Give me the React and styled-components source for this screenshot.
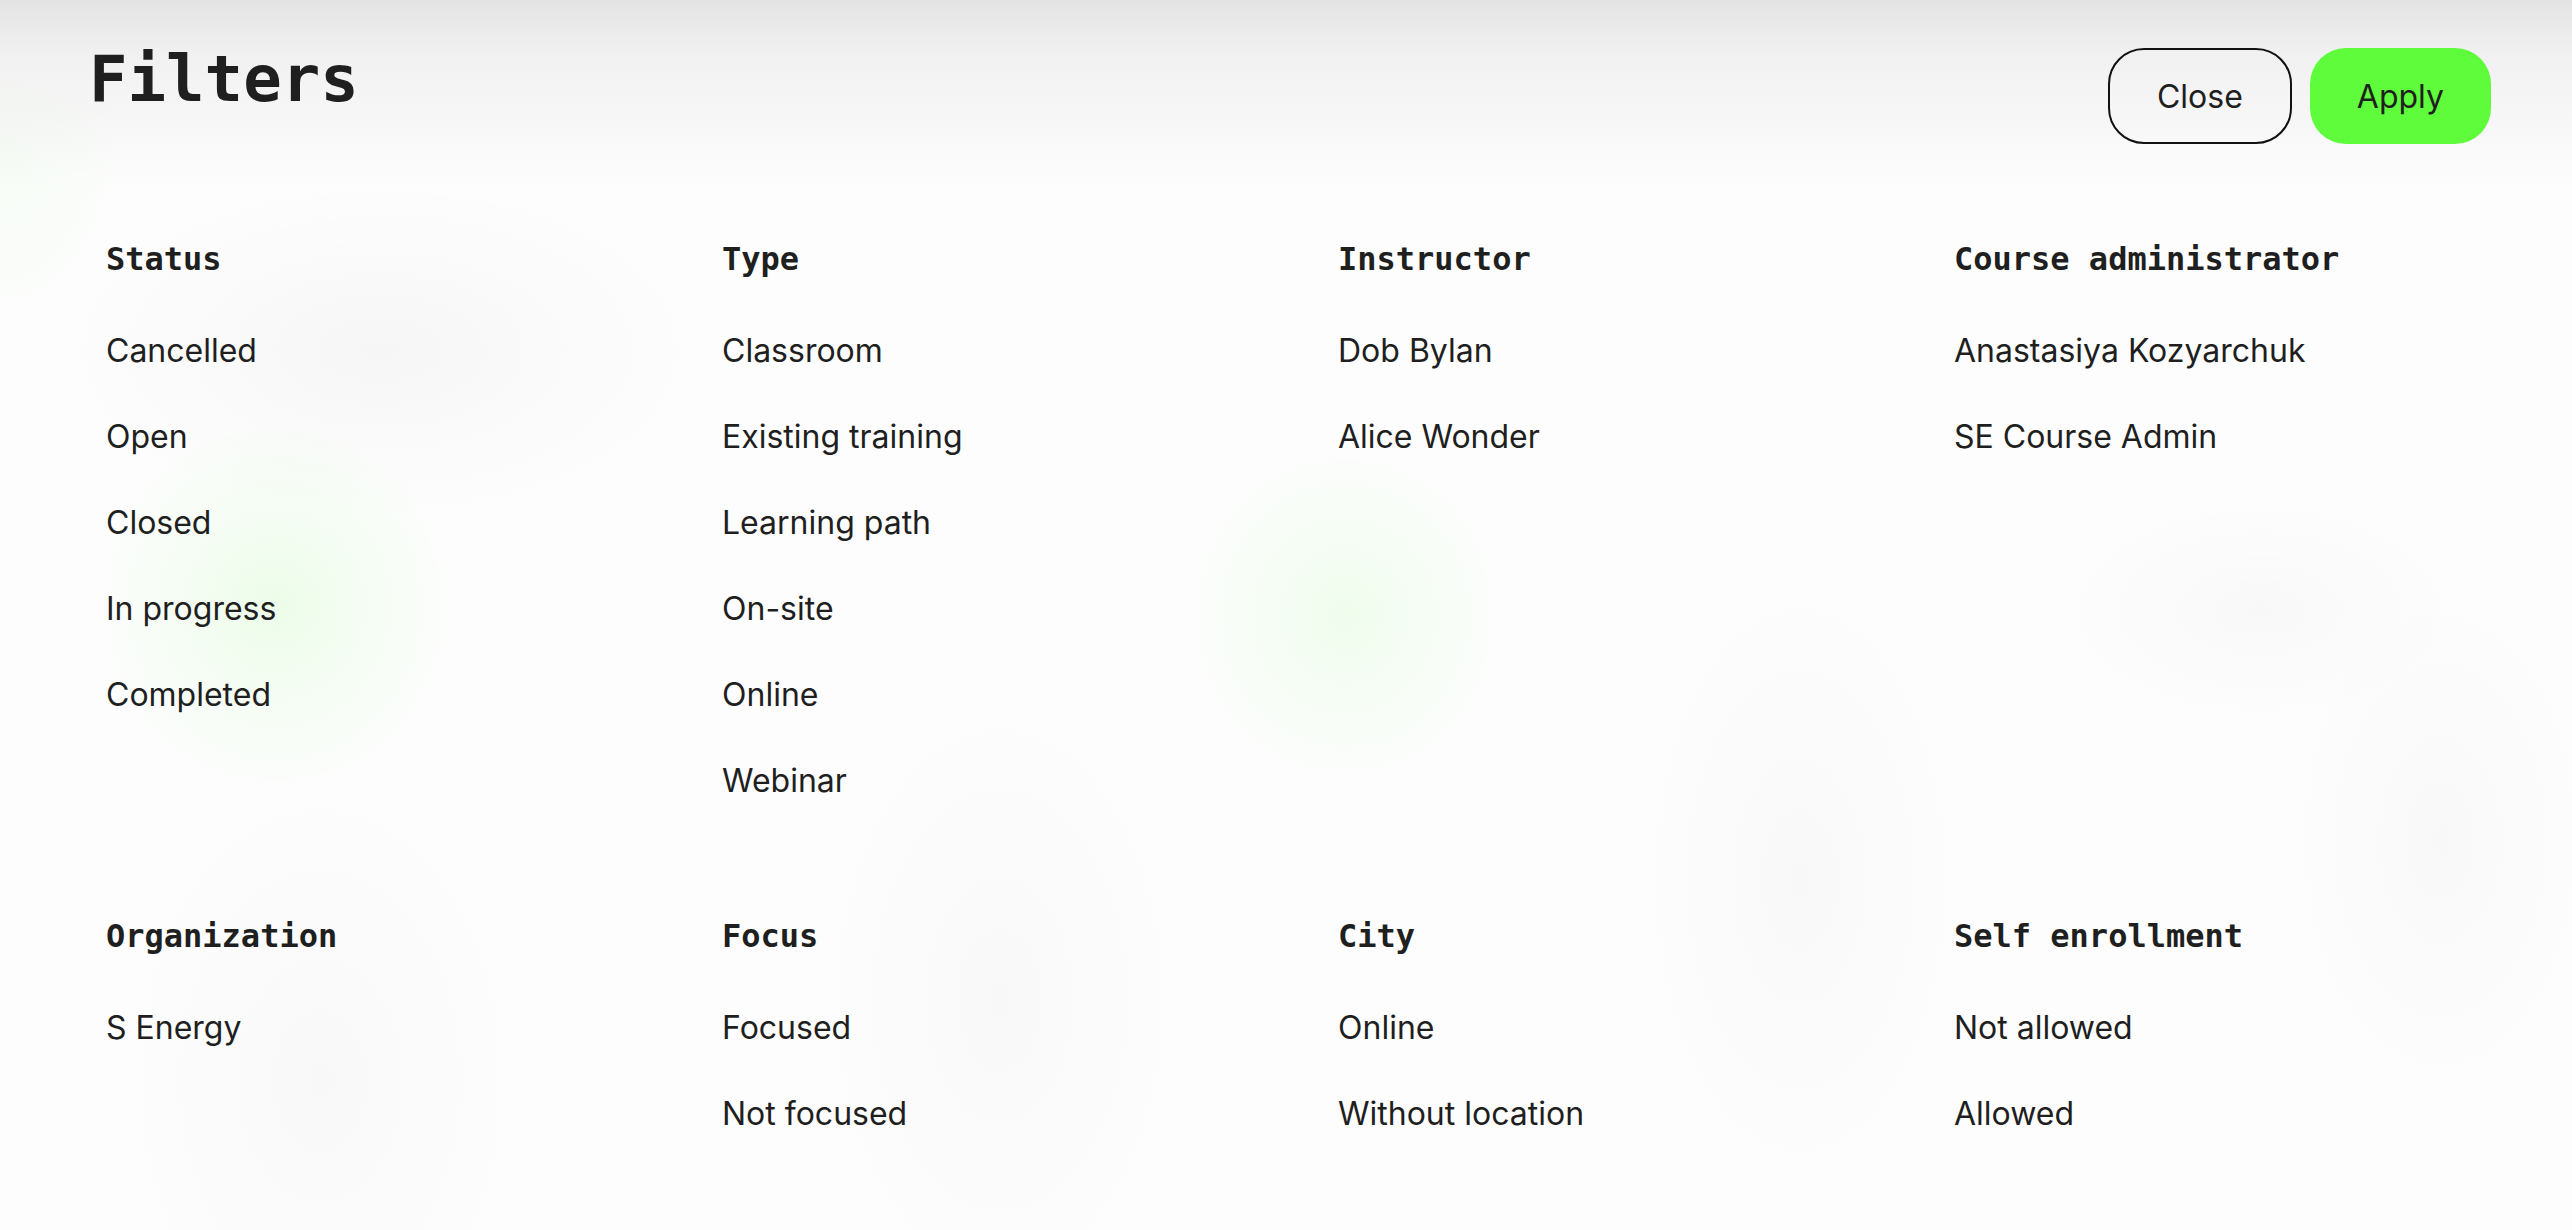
import React from 'react';
import styled, { createGlobalStyle } from 'styled-components';

const filterGroups = [
  [
    { title: 'Status', options: ['Cancelled', 'Open', 'Closed', 'In progress', 'Completed'] },
    { title: 'Type', options: ['Classroom', 'Existing training', 'Learning path', 'On-site', 'Online', 'Webinar'] },
    { title: 'Instructor', options: ['Dob Bylan', 'Alice Wonder'] },
    { title: 'Course administrator', options: ['Anastasiya Kozyarchuk', 'SE Course Admin'] },
  ],
  [
    { title: 'Organization', options: ['S Energy'] },
    { title: 'Focus', options: ['Focused', 'Not focused'] },
    { title: 'City', options: ['Online', 'Without location'] },
    { title: 'Self enrollment', options: ['Not allowed', 'Allowed'] },
  ],
];

const GlobalStyle = createGlobalStyle`
  html, body {
    margin: 0;
    padding: 0;
  }
  body {
    font-family: Inter, "Noto Sans", sans-serif;
    color: #1f1f1f;
    background-color: #fcfdfc;
  }
`;

// 필터 페이지
const App = () => {
  return (
    <>
      <GlobalStyle />
      <Page>
        <Header>
          <Title>Filters</Title>
          <ButtonGroup>
            <Button>Close</Button>
            <Button primary>Apply</Button>
          </ButtonGroup>
        </Header>

        {filterGroups.map((row, i) => (
          <FilterRow key={i}>
            {row.map((group) => (
              <FilterColumn key={group.title}>
                <ColumnTitle>{group.title}</ColumnTitle>
                <OptionList>
                  {group.options.map((option) => (
                    <Option key={option}>{option}</Option>
                  ))}
                </OptionList>
              </FilterColumn>
            ))}
          </FilterRow>
        ))}
      </Page>
    </>
  );
};

export default App;

const Page = styled.div`
  min-height: 100vh;
  box-sizing: border-box;
  padding-bottom: 60px;
  background:
    linear-gradient(to bottom, #e3e3e3 0px, #f1f1f1 55px, rgba(252, 253, 252, 0) 190px),
    radial-gradient(ellipse 120px 200px at 0px 110px, rgba(120, 230, 100, 0.05), transparent),
    radial-gradient(ellipse 170px 180px at 275px 605px, rgba(110, 250, 80, 0.11), transparent),
    radial-gradient(ellipse 150px 160px at 1345px 615px, rgba(110, 250, 80, 0.09), transparent),
    radial-gradient(ellipse 320px 170px at 380px 350px, rgba(0, 0, 0, 0.028), transparent),
    radial-gradient(ellipse 200px 110px at 2260px 610px, rgba(0, 0, 0, 0.02), transparent),
    radial-gradient(ellipse 160px 300px at 1800px 880px, rgba(0, 0, 0, 0.018), transparent),
    radial-gradient(ellipse 200px 300px at 320px 1080px, rgba(0, 0, 0, 0.02), transparent),
    radial-gradient(ellipse 180px 300px at 1000px 1000px, rgba(0, 0, 0, 0.018), transparent),
    radial-gradient(ellipse 150px 250px at 2440px 840px, rgba(0, 0, 0, 0.018), transparent),
    #fcfdfc;
`;

const Header = styled.div`
  display: flex;
  justify-content: space-between;
  align-items: flex-start;
  padding: 47px 81px 0 89px;
`;

const Title = styled.h1`
  margin: 0;
  font-family: "DejaVu Sans Mono", "Liberation Mono", monospace;
  font-size: 64px;
  line-height: 1;
  font-weight: 700;
  color: #1e1f1e;
`;

const ButtonGroup = styled.div`
  display: flex;
  gap: 18px;
  margin-top: 1px;
`;

const Button = styled.button`
  height: 96px;
  padding: 0 47px;
  border-radius: 36px;
  box-sizing: border-box;
  font-family: Inter, "Noto Sans", sans-serif;
  font-size: 32px;
  color: #1f1f1f;
  cursor: pointer;
  border: ${(p) => (p.primary ? 'none' : '2px solid #111')};
  background-color: ${(p) => (p.primary ? '#5efc3a' : 'transparent')};
`;

const FilterRow = styled.div`
  display: grid;
  grid-template-columns: repeat(4, 616px);
  padding-left: 106px;
  margin-top: 97px;

  & + & {
    margin-top: 94px;
  }
`;

const FilterColumn = styled.div`
  display: flex;
  flex-direction: column;
`;

const ColumnTitle = styled.h2`
  margin: 0 0 31px;
  font-family: "DejaVu Sans Mono", "Liberation Mono", monospace;
  font-size: 32px;
  line-height: 36px;
  font-weight: 700;
  color: #1e1f1e;
`;

const OptionList = styled.ul`
  margin: 0;
  padding: 0;
  list-style: none;
`;

const Option = styled.li`
  font-size: 32px;
  line-height: 86px;
  color: #1f1f1f;
  cursor: pointer;
`;
